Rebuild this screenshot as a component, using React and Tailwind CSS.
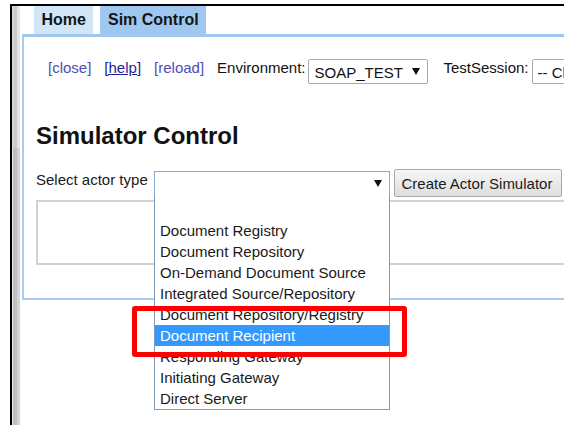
import React from "react";

const actorTypes = [
  "Document Registry",
  "Document Repository",
  "On-Demand Document Source",
  "Integrated Source/Repository",
  "Document Repository/Registry",
  "Document Recipient",
  "Responding Gateway",
  "Initiating Gateway",
  "Direct Server",
];

const selectedActor = "Document Recipient";

const Arrow = () => (
  <svg width="8" height="7" viewBox="0 0 8 7">
    <path d="M0 0H8L4 7Z" fill="#111" />
  </svg>
);

// Small native-looking select with a value and arrow
const MiniSelect = ({ value, width }) => (
  <div
    className={`relative shrink-0 h-[25px] border border-[#a9a9a9] rounded-[2px] bg-white pl-[5px] pt-[4px] text-[15px] leading-[17px] text-[#111] whitespace-nowrap ${width}`}
  >
    {value}
    <span className="absolute right-[7px] top-[8px] flex">
      <Arrow />
    </span>
  </div>
);

const Tabs = () => (
  <div className="flex h-[31px] gap-[7px] pl-[12px] border-b-[3px] border-[#9fc7ef] text-[16px] font-bold leading-[28px] text-[#151515]">
    <div className="px-[7.5px] bg-[#d2e5f7]">Home</div>
    <div className="px-[7.5px] bg-[#9fc7ef]">Sim Control</div>
  </div>
);

const ActorDropdown = () => (
  <div className="absolute left-[-1px] top-full w-[236px] bg-white border border-t-0 border-[#7f9db9] z-10">
    <div className="h-[24px]" />
    {actorTypes.map((name) => (
      <div
        key={name}
        className={`h-[21px] pl-[5px] text-[15px] leading-[21px] whitespace-nowrap ${
          name === selectedActor ? "bg-[#3399ff] text-white" : "text-[#1a1a1a]"
        }`}
      >
        {name}
      </div>
    ))}
  </div>
);

const App = () => {
  return (
    <div className="relative w-[564px] h-[425px] overflow-hidden bg-white font-['Liberation_Sans',Arial,sans-serif]">
      <div className="pl-[10px] pt-[4px] h-full">
        <div className="flex h-full border-l-2 border-t-2 border-black">
          {/* scroll strip */}
          <div className="w-[8px] shrink-0 flex flex-col">
            <div className="h-[142px] flex">
              <div className="w-[2px] bg-[#d6d6d6]" />
              <div className="w-[3px] bg-[#cacaca]" />
              <div className="w-[3px] bg-[#e4e4e4]" />
            </div>
            <div className="flex-1 flex">
              <div className="w-[1px] bg-[#e6e6e6]" />
              <div className="w-[4px] bg-[#bfbfbf]" />
              <div className="w-[3px] bg-[#d4d4d4]" />
            </div>
          </div>
          <div className="w-[2px] shrink-0" />

          <div className="flex-1 min-w-0 flex flex-col">
            <Tabs />

            <div className="h-[263px] border-l-2 border-b-2 border-[#a9cdf2]">
              {/* link bar */}
              <div className="flex items-start pt-[22px] pl-[24px] text-[15px] leading-[17px] whitespace-nowrap">
                <span className="shrink-0 text-[#4d4db3]">[close]</span>
                <span className="shrink-0 ml-[13px] text-[#1f1f9c] underline">[help]</span>
                <span className="shrink-0 ml-[13px] text-[#4d4db3]">[reload]</span>
                <span className="shrink-0 ml-[13px] text-[#111]">Environment:</span>
                <div className="ml-[3px]">
                  <MiniSelect value="SOAP_TEST" width="w-[120px]" />
                </div>
                <span className="shrink-0 ml-[15px] text-[#111]">TestSession:</span>
                <div className="ml-[3px]">
                  <MiniSelect value="-- Choose --" width="w-[110px]" />
                </div>
              </div>

              <div className="pl-[12px]">
                <h1 className="mt-[38px] text-[24px] font-bold leading-[28px] text-[#111]">
                  Simulator Control
                </h1>

                <div className="flex items-start mt-[19px] whitespace-nowrap">
                  <span className="shrink-0 w-[118px] mt-[2px] text-[15px] leading-[17px] text-[#1a1a1a]">
                    Select actor type
                  </span>
                  <div className="relative shrink-0 mt-[2px] w-[236px] h-[26px] border border-[#86acdc] bg-white">
                    <span className="absolute right-[7px] top-[8px] flex">
                      <Arrow />
                    </span>
                    <ActorDropdown />
                  </div>
                  <button className="shrink-0 ml-[3.5px] w-[168px] h-[28px] pl-[7px] text-left border border-[#a8a8a8] rounded-[2px] bg-gradient-to-b from-[#f6f6f6] to-[#dedede] text-[15px] leading-[17px] text-[#1a1a1a]">
                    Create Actor Simulator
                  </button>
                </div>

                <div className="mt-[3px] w-[560px] h-[65px] border-2 border-[#d2d2d2]" />
              </div>
            </div>
          </div>
        </div>
      </div>

      {/* callout around the chosen actor */}
      <div className="absolute left-[132px] top-[306px] w-[275px] h-[51px] border-[5px] border-[#ff0000] rounded-[3px] z-20" />
    </div>
  );
};

export default App;
